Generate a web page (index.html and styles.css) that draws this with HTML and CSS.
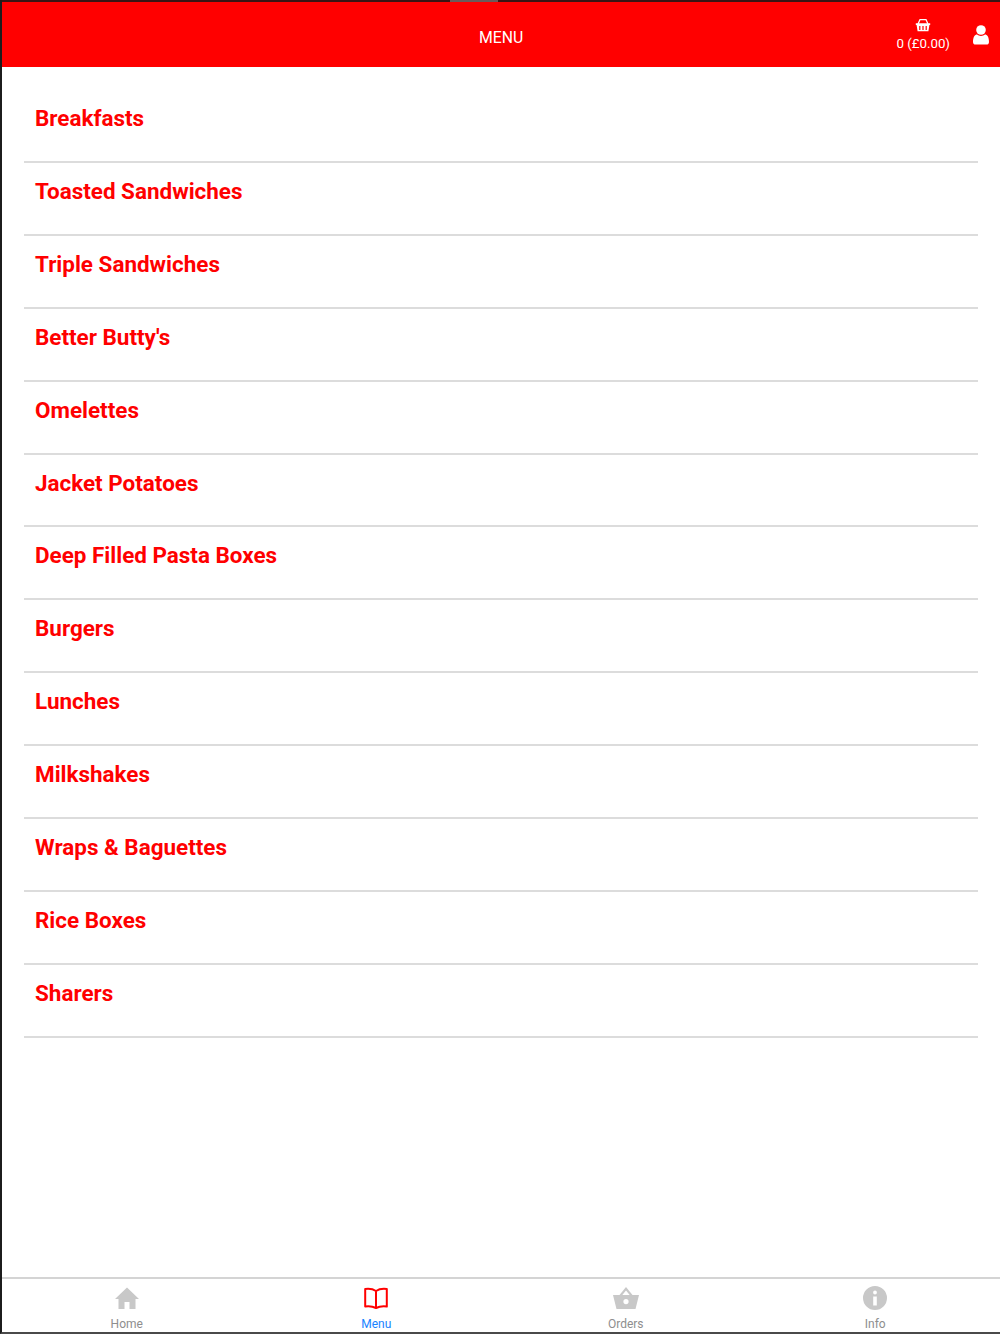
FILE: index.html
```html
<!DOCTYPE html>
<html lang="en">
<head>
<meta charset="utf-8">
<title>Menu</title>
<link rel="stylesheet" href="styles.css">
</head>
<body>
<div class="screen">
  <div class="status"><span class="notch"></span></div>
  <header class="header">
    <h1 class="title">MENU</h1>
    <div class="basket">
      <svg class="basket-icon" viewBox="0 0 16 14" width="16" height="14" aria-hidden="true">
        <path class="basket-handle" d="M3 6 L5 1.6 H11 L13 6"/>
        <path class="basket-fill" d="M0.8 5.2 H15.2 V7 H14.4 L13.4 13.2 H2.6 L1.6 7 H0.8 Z"/>
        <path class="basket-bars" d="M4.8 8 V12 M8 8 V12 M11.2 8 V12"/>
      </svg>
      <span class="basket-text">0 (£0.00)</span>
    </div>
    <svg class="user-icon" viewBox="0 0 16 20" width="16" height="20" aria-hidden="true">
      <circle cx="8" cy="5" r="4.8"/>
      <path d="M0 17 C0 12 2 9.6 4 9.6 C5 10.4 6.4 10.9 8 10.9 C9.6 10.9 11 10.4 12 9.6 C14 9.6 16 12 16 17 C16 18.6 15 19.6 13.4 19.6 H2.6 C1 19.6 0 18.6 0 17 Z"/>
    </svg>
  </header>
  <main class="menu">
    <a class="item item-first">Breakfasts</a>
    <a class="item">Toasted Sandwiches</a>
    <a class="item">Triple Sandwiches</a>
    <a class="item">Better Butty's</a>
    <a class="item">Omelettes</a>
    <a class="item">Jacket Potatoes</a>
    <a class="item">Deep Filled Pasta Boxes</a>
    <a class="item">Burgers</a>
    <a class="item">Lunches</a>
    <a class="item">Milkshakes</a>
    <a class="item">Wraps &amp; Baguettes</a>
    <a class="item">Rice Boxes</a>
    <a class="item">Sharers</a>
  </main>
  <nav class="tabs">
    <a class="tab">
      <svg class="tab-icon" viewBox="0 0 24 24" width="24" height="24" aria-hidden="true">
        <path d="M12 1.5 L24 13 H20.5 V23 H14.5 V16 H9.5 V23 H3.5 V13 H0 Z"/>
      </svg>
      <span class="tab-label">Home</span>
    </a>
    <a class="tab tab-active">
      <svg class="tab-icon" viewBox="0 0 24 24" width="24" height="24" aria-hidden="true">
        <path d="M12 5 C9 3 5 2.5 1.2 3 V20.5 C5 20 9 20.5 12 22 C15 20.5 19 20 22.8 20.5 V3 C19 2.5 15 3 12 5 Z M12 5 V22"/>
      </svg>
      <span class="tab-label">Menu</span>
    </a>
    <a class="tab">
      <svg class="tab-icon" viewBox="0 0 26 24" width="26" height="24" aria-hidden="true">
        <path fill-rule="evenodd" d="M13 1 L19.5 9 H26 L22.5 23 H3.5 L0 9 H6.5 Z M9.3 9 H16.7 L13 4.4 Z M13 13 A2.6 2.6 0 1 0 13 18.2 A2.6 2.6 0 1 0 13 13 Z"/>
      </svg>
      <span class="tab-label">Orders</span>
    </a>
    <a class="tab">
      <svg class="tab-icon" viewBox="0 0 24 24" width="24" height="24" aria-hidden="true">
        <path fill-rule="evenodd" d="M12 0 A12 12 0 1 0 12 24 A12 12 0 1 0 12 0 Z M12 4.6 A1.9 1.9 0 1 0 12 8.4 A1.9 1.9 0 1 0 12 4.6 Z M10.2 10.4 V19.4 H13.8 V10.4 Z"/>
      </svg>
      <span class="tab-label">Info</span>
    </a>
  </nav>
</div>
</body>
</html>
```
FILE: styles.css
```css
* { box-sizing: border-box; }
html, body { margin: 0; padding: 0; }
body { background: #fff; font-family: Roboto, "Liberation Sans", sans-serif; }

.screen {
  width: 1000px;
  height: 1334px;
  display: flex;
  flex-direction: column;
  border-left: 2px solid #1c1c1c;
  border-bottom: 2px solid #4a4a4a;
  overflow: hidden;
}

.status {
  height: 2px;
  flex: none;
  background: #3a1414;
  display: flex;
  justify-content: center;
  padding-right: 54px;
}
.notch { width: 48px; background: #6b5a5a; }

.header {
  flex: none;
  height: 64.5px;
  background: #ff0000;
  color: #fff;
  display: flex;
  align-items: center;
  padding: 0 11px 0 0;
  position: relative;
}
.title {
  margin: 0;
  position: absolute;
  left: 477px;
  top: 26px;
  font-size: 15.8px;
  line-height: 20px;
  font-weight: 400;
}
.basket {
  margin-left: auto;
  display: flex;
  flex-direction: column;
  align-items: center;
  gap: 4px;
  margin-right: 23px;
  margin-top: 2px;
}
.basket-icon { display: block; }
.basket-handle { fill: none; stroke: #fff; stroke-width: 1.3; }
.basket-fill { fill: #fff; }
.basket-bars { fill: none; stroke: #ff0000; stroke-width: 1.2; }
.basket-text { font-size: 13.3px; line-height: 16px; }
.user-icon { fill: #fff; display: block; margin-top: 2px; }

.menu {
  flex: 1;
  display: flex;
  flex-direction: column;
  padding: 0 22px;
}
.item {
  display: flex;
  align-items: flex-start;
  flex: none;
  height: 72.95px;
  padding: 14px 0 0 11px;
  border-bottom: 2px solid #dcdcdc;
  color: #ff0000;
  font-size: 22.45px;
  line-height: 28px;
  font-weight: 700;
}
.item-first { height: 96.3px; padding-top: 37px; }

.tabs {
  flex: none;
  height: 55px;
  border-top: 2px solid #d4d4d4;
  display: grid;
  grid-template-columns: repeat(4, 1fr);
  background: #fff;
}
.tab {
  display: flex;
  flex-direction: column;
  align-items: center;
  padding-top: 7px;
  color: #8e8e8e;
}
.tab-icon { display: block; fill: #c8c8c8; }
.tab-label { font-size: 12px; line-height: 14px; margin-top: 7px; }
.tab-active { color: #1a84ff; }
.tab-active .tab-icon { fill: none; stroke: #ff0000; stroke-width: 2; stroke-linejoin: round; }
```
